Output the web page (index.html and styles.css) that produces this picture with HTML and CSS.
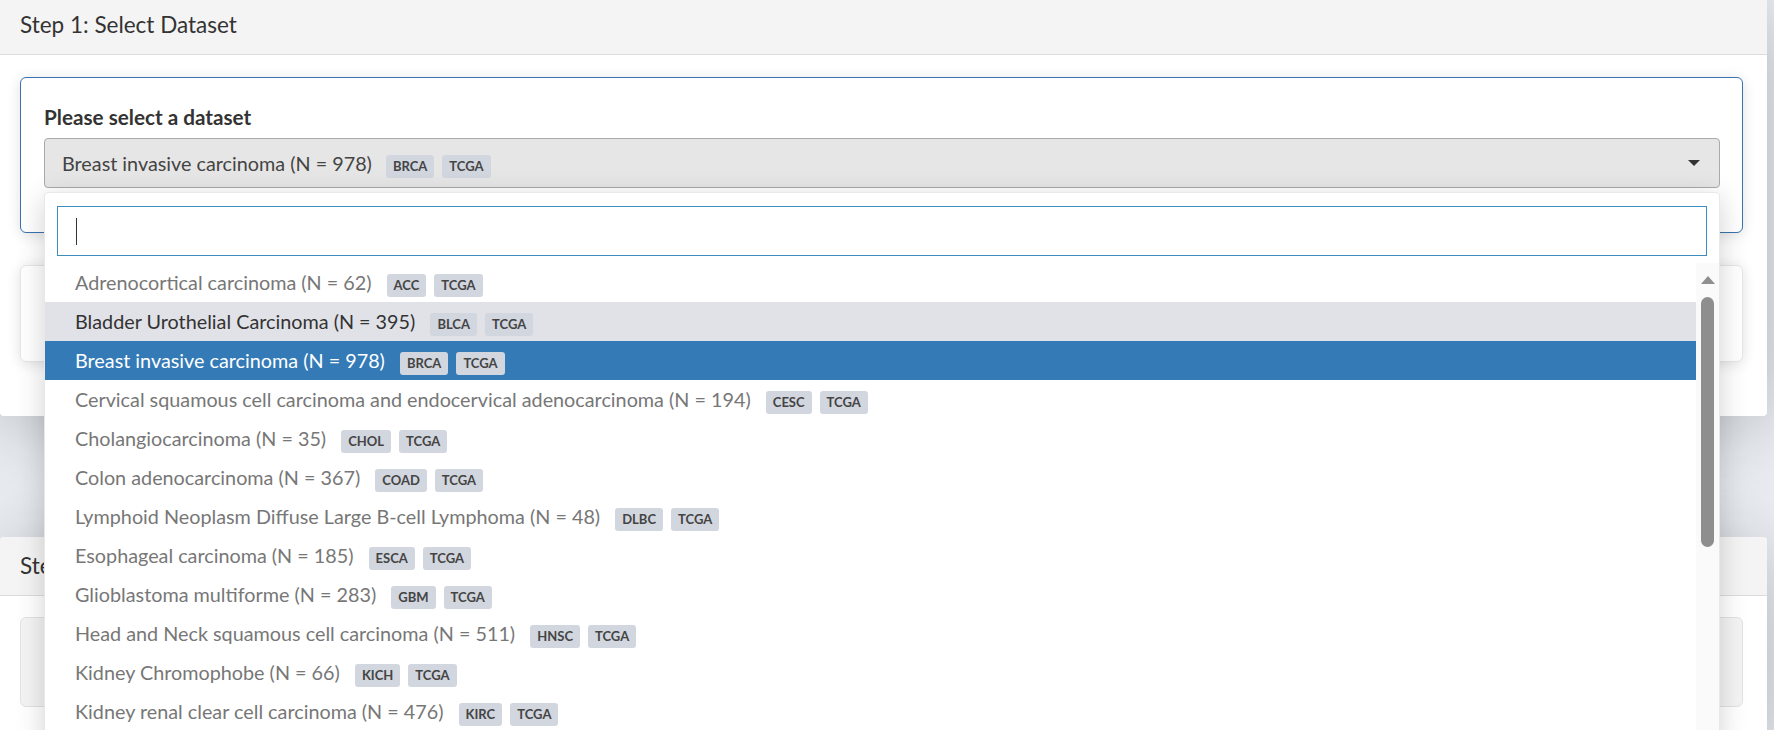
FILE: index.html
```html
<!DOCTYPE html>
<html>
    <head>
        <meta name="viewport" content="width=device-width, initial-scale=1.0">
        <link rel="stylesheet" href="styles.css">
    </head>
    <body>
        <div class="page">

            <section class="panel">
                <div class="panel-head">Step 1: Select Dataset</div>
                <div class="panel-body">

                    <div class="card card-focus">
                        <label class="field-label">Please select a dataset</label>
                        <div class="picker">
                            <div class="picker-toggle">
                                <span class="picker-text">Breast invasive carcinoma (N = 978)</span>
                                <span class="tag first">BRCA</span><span class="tag">TCGA</span>
                                <span class="caret"></span>
                            </div>

                            <div class="picker-menu">
                                <div class="picker-search"><span class="cursor"></span></div>
                                <div class="picker-scroll">
                                    <ul class="picker-list">
                                        <li class="opt">Adrenocortical carcinoma (N = 62) <span class="tag first">ACC</span><span class="tag">TCGA</span></li>
                                        <li class="opt hover">Bladder Urothelial Carcinoma (N = 395) <span class="tag first">BLCA</span><span class="tag">TCGA</span></li>
                                        <li class="opt active">Breast invasive carcinoma (N = 978) <span class="tag first">BRCA</span><span class="tag">TCGA</span></li>
                                        <li class="opt">Cervical squamous cell carcinoma and endocervical adenocarcinoma (N = 194) <span class="tag first">CESC</span><span class="tag">TCGA</span></li>
                                        <li class="opt">Cholangiocarcinoma (N = 35) <span class="tag first">CHOL</span><span class="tag">TCGA</span></li>
                                        <li class="opt">Colon adenocarcinoma (N = 367) <span class="tag first">COAD</span><span class="tag">TCGA</span></li>
                                        <li class="opt">Lymphoid Neoplasm Diffuse Large B-cell Lymphoma (N = 48) <span class="tag first">DLBC</span><span class="tag">TCGA</span></li>
                                        <li class="opt">Esophageal carcinoma (N = 185) <span class="tag first">ESCA</span><span class="tag">TCGA</span></li>
                                        <li class="opt">Glioblastoma multiforme (N = 283) <span class="tag first">GBM</span><span class="tag">TCGA</span></li>
                                        <li class="opt">Head and Neck squamous cell carcinoma (N = 511) <span class="tag first">HNSC</span><span class="tag">TCGA</span></li>
                                        <li class="opt">Kidney Chromophobe (N = 66) <span class="tag first">KICH</span><span class="tag">TCGA</span></li>
                                        <li class="opt">Kidney renal clear cell carcinoma (N = 476) <span class="tag first">KIRC</span><span class="tag">TCGA</span></li>
                                    </ul>
                                    <div class="scrollbar">
                                        <span class="scroll-up"></span>
                                        <span class="scroll-thumb"></span>
                                    </div>
                                </div>
                            </div>
                        </div>
                    </div>

                    <div class="card card-plain"></div>

                </div>
            </section>

            <section class="panel panel-two">
                <div class="panel-head">Step 2: Select Genes</div>
                <div class="panel-body">
                    <div class="well"></div>
                </div>
            </section>

        </div>
    </body>
</html>
```

FILE: styles.css
```css
* {
    box-sizing: border-box;
    margin: 0;
    padding: 0;
}
body {
    margin: 0;
    font-family: Lato, "Liberation Sans", sans-serif;
    background-color: #ecf0f5;
    color: #333;
    overflow: hidden;
}
.page {
    margin-top: -4px;
    margin-right: 7px;
}
.panel {
    background: white;
    border-radius: 4px;
    box-shadow: 0 10px 90px rgba(0, 0, 0, 0.28);
}
.panel-two {
    margin-top: 121px;
}
.panel-head {
    height: 59px;
    line-height: 58px;
    padding-left: 20px;
    font-size: 22.5px;
    background: #f4f4f4;
    border-bottom: 1px solid #dcdcdc;
    border-radius: 4px 4px 0 0;
}
.panel-body {
    padding: 22px 24px 54px 20px;
}
.panel-two .panel-body {
    padding-top: 21px;
}
.card {
    background: white;
    border-radius: 6px;
    box-shadow: 0 2px 14px rgba(0, 0, 0, 0.12);
}
.card-focus {
    border: 1px solid #3a73b0;
    padding: 27px 22px 44px 23px;
}
.card-plain {
    margin-top: 32px;
    height: 97px;
    border: 1px solid #e6e6e6;
}
.well {
    height: 90px;
    background: #f4f4f4;
    border: 1px solid #e2e2e2;
    border-radius: 6px;
}
.field-label {
    display: block;
    font-weight: bold;
    font-size: 20.7px;
    line-height: 24px;
    margin-bottom: 9px;
}
.picker {
    position: relative;
}
.picker-toggle {
    display: flex;
    align-items: baseline;
    height: 50px;
    line-height: 48px;
    padding-left: 17px;
    background: #e6e6e6;
    border: 1px solid #aaa;
    border-radius: 4px;
    font-size: 19.8px;
    color: #444;
}
.caret {
    margin-left: auto;
    margin-right: 19px;
    align-self: center;
    width: 0;
    height: 0;
    border-left: 6px solid transparent;
    border-right: 6px solid transparent;
    border-top: 6px solid #333;
}
.tag {
    display: inline-block;
    height: 23px;
    line-height: 23px;
    padding: 0 7px;
    margin-left: 8px;
    border-radius: 3px;
    background: #d2d6de;
    color: #444;
    font-size: 13px;
    font-weight: bold;
}
.tag.first {
    margin-left: 14px;
}
.opt .tag.first {
    margin-left: 10px;
}
.picker-menu {
    position: absolute;
    top: 54px;
    left: 0;
    right: 0;
    background: white;
    border: 1px solid #e8e8e8;
    border-radius: 4px;
    box-shadow: 0 6px 28px rgba(0, 0, 0, 0.18);
    padding-top: 13px;
}
.picker-search {
    display: flex;
    align-items: center;
    height: 50px;
    margin: 0 12px 7px 12px;
    padding-left: 18px;
    border: 1px solid #3c8dbc;
}
.cursor {
    width: 1px;
    height: 27px;
    background: #333;
}
.picker-scroll {
    display: flex;
    height: 480px;
    overflow: hidden;
}
.picker-list {
    flex: 1;
    list-style: none;
}
.opt {
    height: 39px;
    line-height: 39px;
    padding-left: 30px;
    font-size: 19.8px;
    color: #777;
    white-space: nowrap;
}
.opt.hover {
    background: #e1e2e8;
    color: #333;
}
.opt.active {
    background: #337ab7;
    color: white;
}
.scrollbar {
    width: 23px;
    background: #fafafa;
    display: flex;
    flex-direction: column;
    align-items: center;
    padding-top: 13px;
}
.scroll-up {
    width: 0;
    height: 0;
    border-left: 7px solid transparent;
    border-right: 7px solid transparent;
    border-bottom: 8px solid #8e8e8e;
}
.scroll-thumb {
    margin-top: 13px;
    width: 13px;
    height: 250px;
    border-radius: 7px;
    background: #8e8e8e;
}
```
